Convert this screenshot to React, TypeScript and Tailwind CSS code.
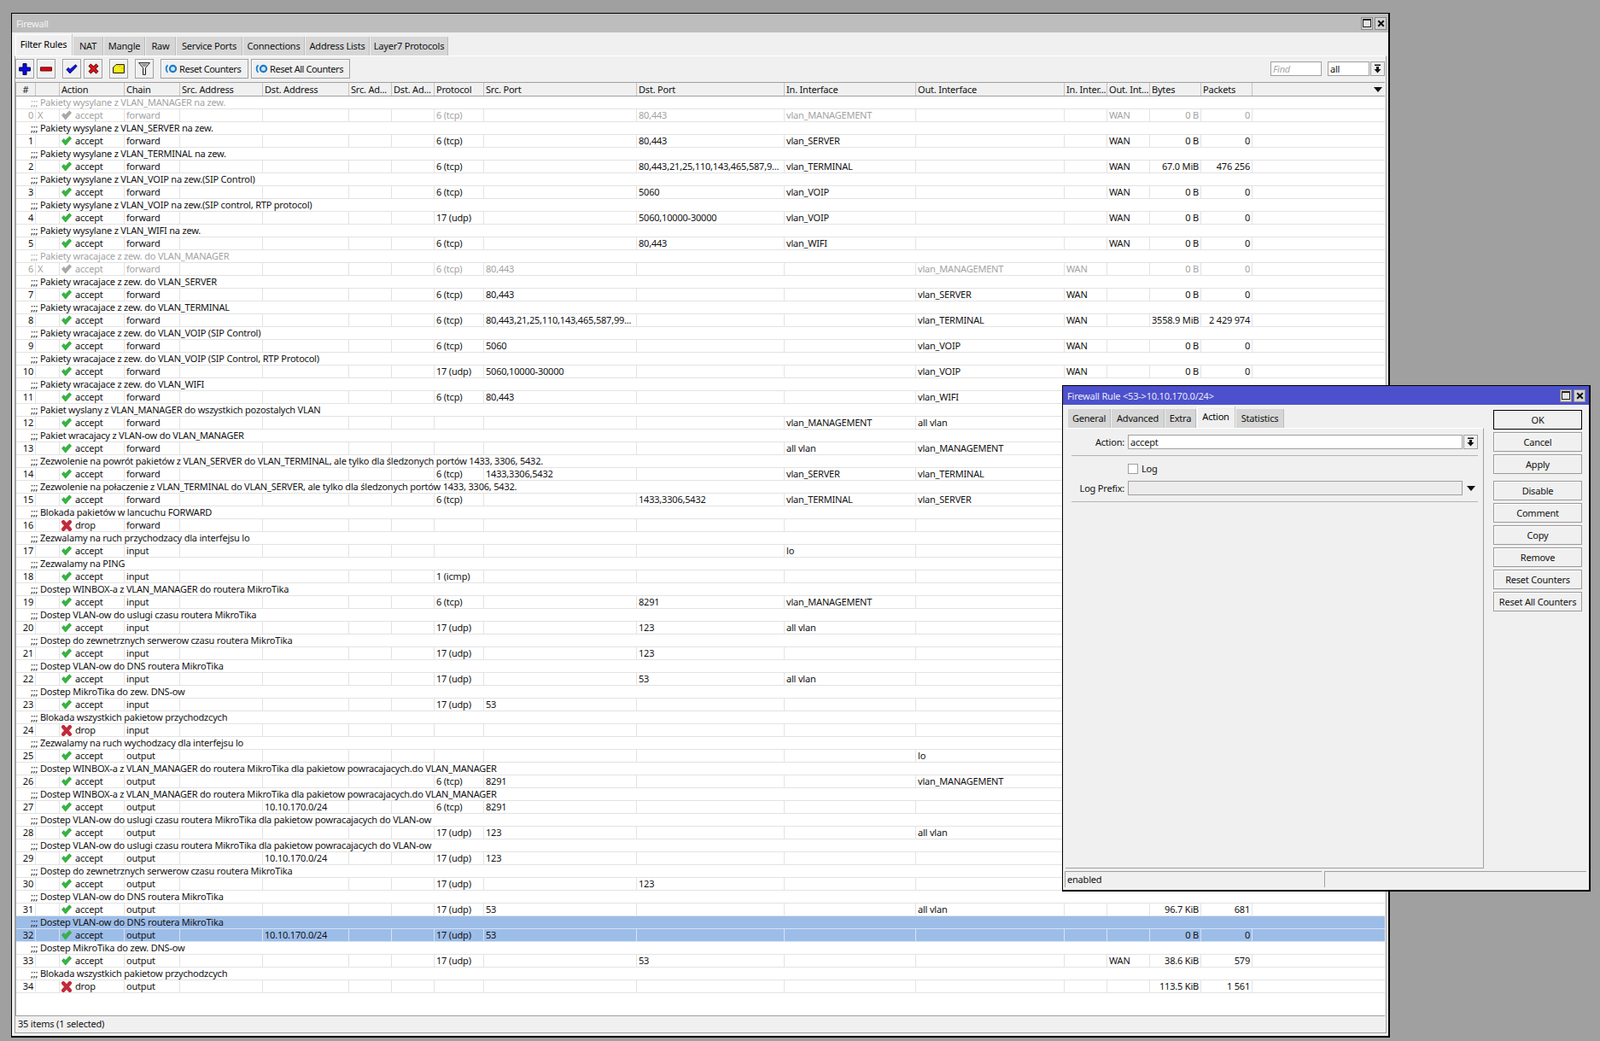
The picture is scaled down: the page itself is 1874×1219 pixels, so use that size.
import React from "react";

type Rule = {
  comment: string;
  action?: "accept" | "drop";
  chain: string;
  dstAddr?: string;
  proto?: string;
  srcPort?: string;
  dstPort?: string;
  inIf?: string;
  outIf?: string;
  inList?: string;
  outList?: string;
  bytes?: string;
  packets?: string;
  disabled?: boolean;
  selected?: boolean;
};

const DNS_COMMENT = "Dostep VLAN-ow do DNS routera MikroTika";
const WINBOX_BACK =
  "Dostep WINBOX-a z VLAN_MANAGER do routera MikroTika dla pakietow powracajacych.do VLAN_MANAGER";
const TIME_BACK =
  "Dostep VLAN-ow do uslugi czasu routera MikroTika dla pakietow powracajacych do VLAN-ow";
const TIME_EXT = "Dostep do zewnetrznych serwerow czasu routera MikroTika";

const rules: Rule[] = [
  { comment: "Pakiety wysylane z VLAN_MANAGER na zew.", chain: "forward", proto: "6 (tcp)", dstPort: "80,443", inIf: "vlan_MANAGEMENT", outList: "WAN", bytes: "0 B", packets: "0", disabled: true },
  { comment: "Pakiety wysylane z VLAN_SERVER na zew.", chain: "forward", proto: "6 (tcp)", dstPort: "80,443", inIf: "vlan_SERVER", outList: "WAN", bytes: "0 B", packets: "0" },
  { comment: "Pakiety wysylane z VLAN_TERMINAL na zew.", chain: "forward", proto: "6 (tcp)", dstPort: "80,443,21,25,110,143,465,587,9...", inIf: "vlan_TERMINAL", outList: "WAN", bytes: "67.0 MiB", packets: "476 256" },
  { comment: "Pakiety wysylane z VLAN_VOIP na zew.(SIP Control)", chain: "forward", proto: "6 (tcp)", dstPort: "5060", inIf: "vlan_VOIP", outList: "WAN", bytes: "0 B", packets: "0" },
  { comment: "Pakiety wysylane z VLAN_VOIP na zew.(SIP control, RTP protocol)", chain: "forward", proto: "17 (udp)", dstPort: "5060,10000-30000", inIf: "vlan_VOIP", outList: "WAN", bytes: "0 B", packets: "0" },
  { comment: "Pakiety wysylane z VLAN_WIFI na zew.", chain: "forward", proto: "6 (tcp)", dstPort: "80,443", inIf: "vlan_WIFI", outList: "WAN", bytes: "0 B", packets: "0" },
  { comment: "Pakiety wracajace z zew. do VLAN_MANAGER", chain: "forward", proto: "6 (tcp)", srcPort: "80,443", outIf: "vlan_MANAGEMENT", inList: "WAN", bytes: "0 B", packets: "0", disabled: true },
  { comment: "Pakiety wracajace z zew. do VLAN_SERVER", chain: "forward", proto: "6 (tcp)", srcPort: "80,443", outIf: "vlan_SERVER", inList: "WAN", bytes: "0 B", packets: "0" },
  { comment: "Pakiety wracajace z zew. do VLAN_TERMINAL", chain: "forward", proto: "6 (tcp)", srcPort: "80,443,21,25,110,143,465,587,99...", outIf: "vlan_TERMINAL", inList: "WAN", bytes: "3558.9 MiB", packets: "2 429 974" },
  { comment: "Pakiety wracajace z zew. do VLAN_VOIP (SIP Control)", chain: "forward", proto: "6 (tcp)", srcPort: "5060", outIf: "vlan_VOIP", inList: "WAN", bytes: "0 B", packets: "0" },
  { comment: "Pakiety wracajace z zew. do VLAN_VOIP (SIP Control, RTP Protocol)", chain: "forward", proto: "17 (udp)", srcPort: "5060,10000-30000", outIf: "vlan_VOIP", inList: "WAN", bytes: "0 B", packets: "0" },
  { comment: "Pakiety wracajace z zew. do VLAN_WIFI", chain: "forward", proto: "6 (tcp)", srcPort: "80,443", outIf: "vlan_WIFI" },
  { comment: "Pakiet wyslany z VLAN_MANAGER do wszystkich pozostalych VLAN", chain: "forward", inIf: "vlan_MANAGEMENT", outIf: "all vlan" },
  { comment: "Pakiet wracajacy z VLAN-ow do VLAN_MANAGER", chain: "forward", inIf: "all vlan", outIf: "vlan_MANAGEMENT" },
  { comment: "Zezwolenie na powrót pakietów z VLAN_SERVER do VLAN_TERMINAL, ale tylko dla śledzonych portów 1433, 3306, 5432.", chain: "forward", proto: "6 (tcp)", srcPort: "1433,3306,5432", inIf: "vlan_SERVER", outIf: "vlan_TERMINAL" },
  { comment: "Zezwolenie na połaczenie z VLAN_TERMINAL do VLAN_SERVER, ale tylko dla śledzonych portów 1433, 3306, 5432.", chain: "forward", proto: "6 (tcp)", dstPort: "1433,3306,5432", inIf: "vlan_TERMINAL", outIf: "vlan_SERVER" },
  { comment: "Blokada pakietów w lancuchu FORWARD", action: "drop", chain: "forward" },
  { comment: "Zezwalamy na ruch przychodzacy dla interfejsu lo", chain: "input", inIf: "lo" },
  { comment: "Zezwalamy na PING", chain: "input", proto: "1 (icmp)" },
  { comment: "Dostep WINBOX-a z VLAN_MANAGER do routera MikroTika", chain: "input", proto: "6 (tcp)", dstPort: "8291", inIf: "vlan_MANAGEMENT" },
  { comment: "Dostep VLAN-ow do uslugi czasu routera MikroTika", chain: "input", proto: "17 (udp)", dstPort: "123", inIf: "all vlan" },
  { comment: TIME_EXT, chain: "input", proto: "17 (udp)", dstPort: "123" },
  { comment: DNS_COMMENT, chain: "input", proto: "17 (udp)", dstPort: "53", inIf: "all vlan" },
  { comment: "Dostep MikroTika do zew. DNS-ow", chain: "input", proto: "17 (udp)", srcPort: "53" },
  { comment: "Blokada wszystkich pakietow przychodzcych", action: "drop", chain: "input" },
  { comment: "Zezwalamy na ruch wychodzacy dla interfejsu lo", chain: "output", outIf: "lo" },
  { comment: WINBOX_BACK, chain: "output", proto: "6 (tcp)", srcPort: "8291", outIf: "vlan_MANAGEMENT" },
  { comment: WINBOX_BACK, chain: "output", dstAddr: "10.10.170.0/24", proto: "6 (tcp)", srcPort: "8291" },
  { comment: TIME_BACK, chain: "output", proto: "17 (udp)", srcPort: "123", outIf: "all vlan" },
  { comment: TIME_BACK, chain: "output", dstAddr: "10.10.170.0/24", proto: "17 (udp)", srcPort: "123" },
  { comment: TIME_EXT, chain: "output", proto: "17 (udp)", dstPort: "123" },
  { comment: DNS_COMMENT, chain: "output", proto: "17 (udp)", srcPort: "53", outIf: "all vlan", bytes: "96.7 KiB", packets: "681" },
  { comment: DNS_COMMENT, chain: "output", dstAddr: "10.10.170.0/24", proto: "17 (udp)", srcPort: "53", bytes: "0 B", packets: "0", selected: true },
  { comment: "Dostep MikroTika do zew. DNS-ow", chain: "output", proto: "17 (udp)", dstPort: "53", outList: "WAN", bytes: "38.6 KiB", packets: "579" },
  { comment: "Blokada wszystkich pakietow przychodzcych", action: "drop", chain: "output", bytes: "113.5 KiB", packets: "1 561" },
];

const COLS =
  "grid grid-cols-[23px_28px_76px_65px_97px_101px_50px_50px_58px_179px_173px_154px_174px_50px_50px_60px_60px_1fr]";

const headers = [
  "#", "", "Action", "Chain", "Src. Address", "Dst. Address", "Src. Ad...", "Dst. Ad...", "Protocol",
  "Src. Port", "Dst. Port", "In. Interface", "Out. Interface", "In. Inter...", "Out. Int...", "Bytes", "Packets",
];

const GreenCheck = ({ color = "#35b53f", edge = "#1f8f2c" }: { color?: string; edge?: string }) => (
  <svg width="12" height="12" viewBox="0 0 12 12" className="shrink-0">
    <path d="M.4 6 2.8 3.4 4.7 5.4 9.3.8 11.7 3.1 4.7 11.2Z" fill={color} stroke={edge} strokeWidth=".5" />
  </svg>
);

const RedCross = () => (
  <svg width="12" height="13" viewBox="0 0 12 13" className="shrink-0">
    <path d="M2.2 2.2 9.8 10.8M9.8 2.2 2.2 10.8" stroke="#c22a3c" strokeWidth="4.4" strokeLinecap="round" />
  </svg>
);

const Cell = ({ className = "", children }: { className?: string; children?: React.ReactNode }) => (
  <div className={`border-r overflow-hidden whitespace-nowrap px-[2px] h-[14px] leading-[14px] ${className}`}>
    {children}
  </div>
);

const RuleRows = ({ rule, index }: { rule: Rule; index: number }) => {
  const text = rule.disabled ? "text-[#a3a3a3]" : "text-[#111]";
  const bg = rule.selected ? "bg-[#9dbde9]" : "bg-white";
  const line = rule.selected ? "border-[#d5e2f4]" : "border-[#e3e3e3]";
  const action = rule.action ?? "accept";
  return (
    <>
      <div className={`h-[15px] border-b leading-[14px] pl-[17px] whitespace-nowrap overflow-hidden ${bg} ${text} ${line}`}>
        ;;; {rule.comment}
      </div>
      <div className={`${COLS} h-[15px] border-b ${bg} ${text} ${line}`}>
        <Cell className={`text-right ${line}`}>{index}</Cell>
        <Cell className={line}>{rule.disabled ? "X" : ""}</Cell>
        <Cell className={`${line} flex items-center gap-[4px]`}>
          {action === "drop" ? (
            <RedCross />
          ) : rule.disabled ? (
            <GreenCheck color="#a8a8a8" edge="#9a9a9a" />
          ) : (
            <GreenCheck />
          )}
          <span>{action}</span>
        </Cell>
        <Cell className={line}>{rule.chain}</Cell>
        <Cell className={line}></Cell>
        <Cell className={line}>{rule.dstAddr}</Cell>
        <Cell className={line}></Cell>
        <Cell className={line}></Cell>
        <Cell className={line}>{rule.proto}</Cell>
        <Cell className={line}>{rule.srcPort}</Cell>
        <Cell className={line}>{rule.dstPort}</Cell>
        <Cell className={line}>{rule.inIf}</Cell>
        <Cell className={line}>{rule.outIf}</Cell>
        <Cell className={line}>{rule.inList}</Cell>
        <Cell className={line}>{rule.outList}</Cell>
        <Cell className={`text-right ${line}`}>{rule.bytes}</Cell>
        <Cell className={`text-right ${line}`}>{rule.packets}</Cell>
        <div />
      </div>
    </>
  );
};

const WindowButtons = () => (
  <div className="flex gap-[2px]">
    <div className="w-[14px] h-[15px] bg-[#d4d4d4] border border-[#8a8a8a] flex items-center justify-center">
      <div className="w-[10px] h-[10px] border border-[#222] border-t-2 bg-[#e4e4e4]" />
    </div>
    <div className="w-[14px] h-[15px] bg-[#d4d4d4] border border-[#8a8a8a] flex items-center justify-center">
      <svg width="9" height="9" viewBox="0 0 9 9">
        <path d="M1.2 1.2 7.8 7.8M7.8 1.2 1.2 7.8" stroke="#111" strokeWidth="2" />
      </svg>
    </div>
  </div>
);

const Tab = ({ label, width, active }: { label: string; width: string; active?: boolean }) => (
  <div
    className={
      active
        ? `${width} h-[25px] bg-[#f0f0f0] shadow-[inset_1px_1px_0_#ffffff] border-r border-[#c8c8c8] pt-[2px] text-center leading-[20px] text-black`
        : `${width} h-[22px] bg-[#d6d6d6] border-r border-[#bcbcbc] text-center leading-[22px] text-[#111]`
    }
  >
    {label}
  </div>
);

const ToolButton = ({ children, className = "w-[22px] justify-center" }: { children: React.ReactNode; className?: string }) => (
  <div className={`${className} h-[23px] bg-[#f0f0f0] border border-[#a0a0a0] shadow-[inset_1px_1px_0_#ffffff] flex items-center`}>
    {children}
  </div>
);

const ResetIcon = () => (
  <svg width="15" height="11" viewBox="0 0 15 11" className="shrink-0">
    <path d="M3.5 1.2C1 3.2 1 7.8 3.5 9.8" fill="none" stroke="#1f7fd0" strokeWidth="1.8" />
    <circle cx="9.5" cy="5.5" r="3.6" fill="#c8e8fa" stroke="#1f78c8" strokeWidth="2.2" />
  </svg>
);

const DropArrow = () => (
  <svg width="9" height="11" viewBox="0 0 9 11">
    <path d="M1 .5H8V2H1ZM3 3H6V6H8.5L4.5 10.5.5 6H3Z" fill="#111" />
  </svg>
);

const Triangle = () => (
  <svg width="10" height="6" viewBox="0 0 10 6">
    <path d="M0 0H10L5 6Z" fill="#111" />
  </svg>
);

const DialogButton = ({ label, strong, className = "" }: { label: string; strong?: boolean; className?: string }) => (
  <div
    className={`h-[23px] w-[104px] text-center leading-[21px] text-[#111] bg-[#f0f0f0] border ${
      strong ? "border-black" : "border-[#9a9a9a] shadow-[inset_1px_1px_0_#ffffff]"
    } ${className}`}
  >
    {label}
  </div>
);

const RuleDialog = () => (
  <div className="absolute left-[1244px] top-[451px] w-[619px] h-[593px] border-t border-l border-r-2 border-b-2 border-black bg-[#f0f0f0] flex flex-col">
    <div className="h-[22px] shrink-0 bg-[#4c50cc] flex items-center justify-between pl-[5px] pr-[4px] text-[#e8e8f8]">
      <span className="pt-[2px]">Firewall Rule &lt;53-&gt;10.10.170.0/24&gt;</span>
      <WindowButtons />
    </div>
    <div className="flex h-[543px] shrink-0">
      <div className="w-[493px] pl-[3px] flex flex-col">
        <div className="h-[27px] shrink-0 flex items-end gap-[1px] pl-[3px]">
          <Tab label="General" width="w-[50px]" />
          <Tab label="Advanced" width="w-[62px]" />
          <Tab label="Extra" width="w-[36px]" />
          <Tab label="Action" width="w-[45px]" active />
          <Tab label="Statistics" width="w-[56px]" />
        </div>
        <div className="flex-1 border-t border-t-white border-r border-b border-r-[#a0a0a0] border-b-[#a0a0a0] pt-[7px]">
          <div className="flex items-center h-[17px]">
            <span className="w-[69px] text-right text-[#111]">Action:</span>
            <div className="ml-[4px] w-[392px] h-[17px] bg-white border border-[#a0a0a0] pl-[2px] leading-[15px] text-[#111]">
              accept
            </div>
            <div className="ml-[1px] w-[17px] h-[17px] border border-[#a0a0a0] flex items-center justify-center">
              <DropArrow />
            </div>
          </div>
          <div className="mt-[7px] ml-[7px] w-[476px] h-[1px] bg-[#b4b4b4]" />
          <div className="mt-[9px] ml-[73px] flex items-center h-[12px]">
            <div className="w-[12px] h-[12px] bg-white border border-[#a0a0a0]" />
            <span className="ml-[4px] text-[#111]">Log</span>
          </div>
          <div className="mt-[8px] flex items-center h-[17px]">
            <span className="w-[69px] text-right text-[#111]">Log Prefix:</span>
            <div className="ml-[4px] w-[392px] h-[17px] bg-[#ececec] border border-[#a0a0a0]" />
            <div className="ml-[1px] w-[17px] h-[17px] flex items-center justify-center">
              <Triangle />
            </div>
          </div>
          <div className="mt-[7px] ml-[7px] w-[476px] h-[1px] bg-[#b4b4b4]" />
        </div>
      </div>
      <div className="ml-[11px] pt-[6px] flex flex-col gap-[3px]">
        <DialogButton label="OK" strong />
        <DialogButton label="Cancel" />
        <DialogButton label="Apply" />
        <DialogButton label="Disable" className="mt-[5px]" />
        <DialogButton label="Comment" />
        <DialogButton label="Copy" />
        <DialogButton label="Remove" />
        <DialogButton label="Reset Counters" />
        <DialogButton label="Reset All Counters" />
      </div>
    </div>
    <div className="mt-[3px] ml-[2px] flex gap-[3px] h-[19px]">
      <div className="w-[301px] border-t border-l border-[#a0a0a0] pl-[2px] leading-[18px] text-[#111]">enabled</div>
      <div className="w-[307px] border-t border-l border-[#a0a0a0]" />
    </div>
  </div>
);

export default function App() {
  return (
    <div className="relative h-[1219px] w-[1874px] overflow-hidden bg-[#a0a0a0] pt-[15px] pl-[13px] font-['Liberation_Sans'] text-[11px] leading-[14px] tracking-[-0.2px]">
      <div className="w-[1615px] h-[1200px] border-t border-l border-r-2 border-b-2 border-black bg-[#f0f0f0] flex flex-col">
        <div className="h-[22px] shrink-0 bg-[#bdbdbd] flex items-center justify-between pl-[5px] pr-[2px] text-[#f4f4f4]">
          <span className="pt-[2px]">Firewall</span>
          <WindowButtons />
        </div>
        <div className="h-[27px] shrink-0 flex items-end gap-[1px] pl-[4px]">
          <Tab label="Filter Rules" width="w-[67px]" active />
          <Tab label="NAT" width="w-[35px]" />
          <Tab label="Mangle" width="w-[48px]" />
          <Tab label="Raw" width="w-[35px]" />
          <Tab label="Service Ports" width="w-[77px]" />
          <Tab label="Connections" width="w-[72px]" />
          <Tab label="Address Lists" width="w-[75px]" />
          <Tab label="Layer7 Protocols" width="w-[91px]" />
        </div>
        <div className="flex-1 ml-[3px] mr-[2px] mb-[3px] border-t border-t-white border-l border-r border-b border-l-[#a0a0a0] border-r-[#a0a0a0] border-b-[#a0a0a0] flex flex-col">
          <div className="h-[30px] shrink-0 flex items-start pt-[3px] pr-[1px]">
            <div className="flex gap-[3px]">
              <ToolButton>
                <svg width="14" height="14" viewBox="0 0 14 14">
                  <path d="M5 .5H9V5H13.5V9H9V13.5H5V9H.5V5H5Z" fill="#0a0ae0" stroke="#000050" />
                </svg>
              </ToolButton>
              <ToolButton>
                <svg width="14" height="6" viewBox="0 0 14 6">
                  <path d="M.5.8H13.5V5H.5Z" fill="#e00010" stroke="#601010" />
                </svg>
              </ToolButton>
            </div>
            <div className="ml-[8px] flex gap-[3px]">
              <ToolButton>
                <svg width="14" height="12" viewBox="0 0 14 12">
                  <path d="M.8 6.5 3.2 4.3 5 6.3 11.4.7 13.2 2.4 5 11Z" fill="#1414e0" stroke="#000060" strokeWidth=".8" />
                </svg>
              </ToolButton>
              <ToolButton>
                <svg width="13" height="13" viewBox="0 0 13 13">
                  <path d="M2 2 11 11M11 2 2 11" stroke="#111" strokeWidth="4.2" />
                  <path d="M2 2 11 11M11 2 2 11" stroke="#ee1010" strokeWidth="2.6" />
                </svg>
              </ToolButton>
            </div>
            <div className="ml-[8px]">
              <ToolButton>
                <svg width="14" height="11" viewBox="0 0 14 11">
                  <path d="M4 .6H13.4V10.4H.6V4Z" fill="#f6ec18" stroke="#111" />
                  <path d="M7 3H9M10 5H12" stroke="#c8bc10" />
                </svg>
              </ToolButton>
            </div>
            <div className="ml-[8px]">
              <ToolButton>
                <svg width="14" height="15" viewBox="0 0 14 15">
                  <path d="M.6.6H13.4L8.5 6.5V14.4H5.5V6.5Z" fill="#dfe3e8" stroke="#222" />
                  <path d="M3 1.8H11L8 5H6Z" fill="#8c96a0" />
                </svg>
              </ToolButton>
            </div>
            <div className="ml-[8px] flex gap-[3px]">
              <ToolButton className="w-[103px] pl-[4px] gap-[2px] text-[#111] tracking-[-0.45px]">
                <ResetIcon />
                <span>Reset Counters</span>
              </ToolButton>
              <ToolButton className="w-[116px] pl-[4px] gap-[2px] text-[#111] tracking-[-0.45px]">
                <ResetIcon />
                <span>Reset All Counters</span>
              </ToolButton>
            </div>
            <div className="ml-auto flex mt-[3px]">
              <div className="w-[60px] h-[17px] bg-white border border-[#a0a0a0] pl-[2px] leading-[15px] italic text-[#a8a8a8]">
                Find
              </div>
              <div className="ml-[7px] w-[49px] h-[17px] bg-white border border-[#a0a0a0] pl-[2px] leading-[15px] text-[#111]">
                all
              </div>
              <div className="ml-[1px] w-[17px] h-[17px] border border-[#a0a0a0] flex items-center justify-center">
                <DropArrow />
              </div>
            </div>
          </div>
          <div className="h-[1094px] shrink-0 mr-[1px] border border-r-0 border-[#a0a0a0] bg-white overflow-hidden">
            <div className={`${COLS} h-[16px] bg-[#f0f0f0] border-b border-[#a0a0a0]`}>
              {headers.map((h, i) => (
                <div
                  key={i}
                  className={`border-r border-[#c4c4c4] px-[2px] leading-[15px] whitespace-nowrap overflow-hidden text-[#111] ${i === 0 ? "text-center" : ""}`}
                >
                  {h}
                </div>
              ))}
              <div className="flex items-center justify-end pr-[3px]">
                <Triangle />
              </div>
            </div>
            {rules.map((rule, i) => (
              <RuleRows key={i} rule={rule} index={i} />
            ))}
          </div>
          <div className="flex-1 pl-[3px] pt-[2px] text-[#111]">35 items (1 selected)</div>
        </div>
      </div>
      <RuleDialog />
    </div>
  );
}
